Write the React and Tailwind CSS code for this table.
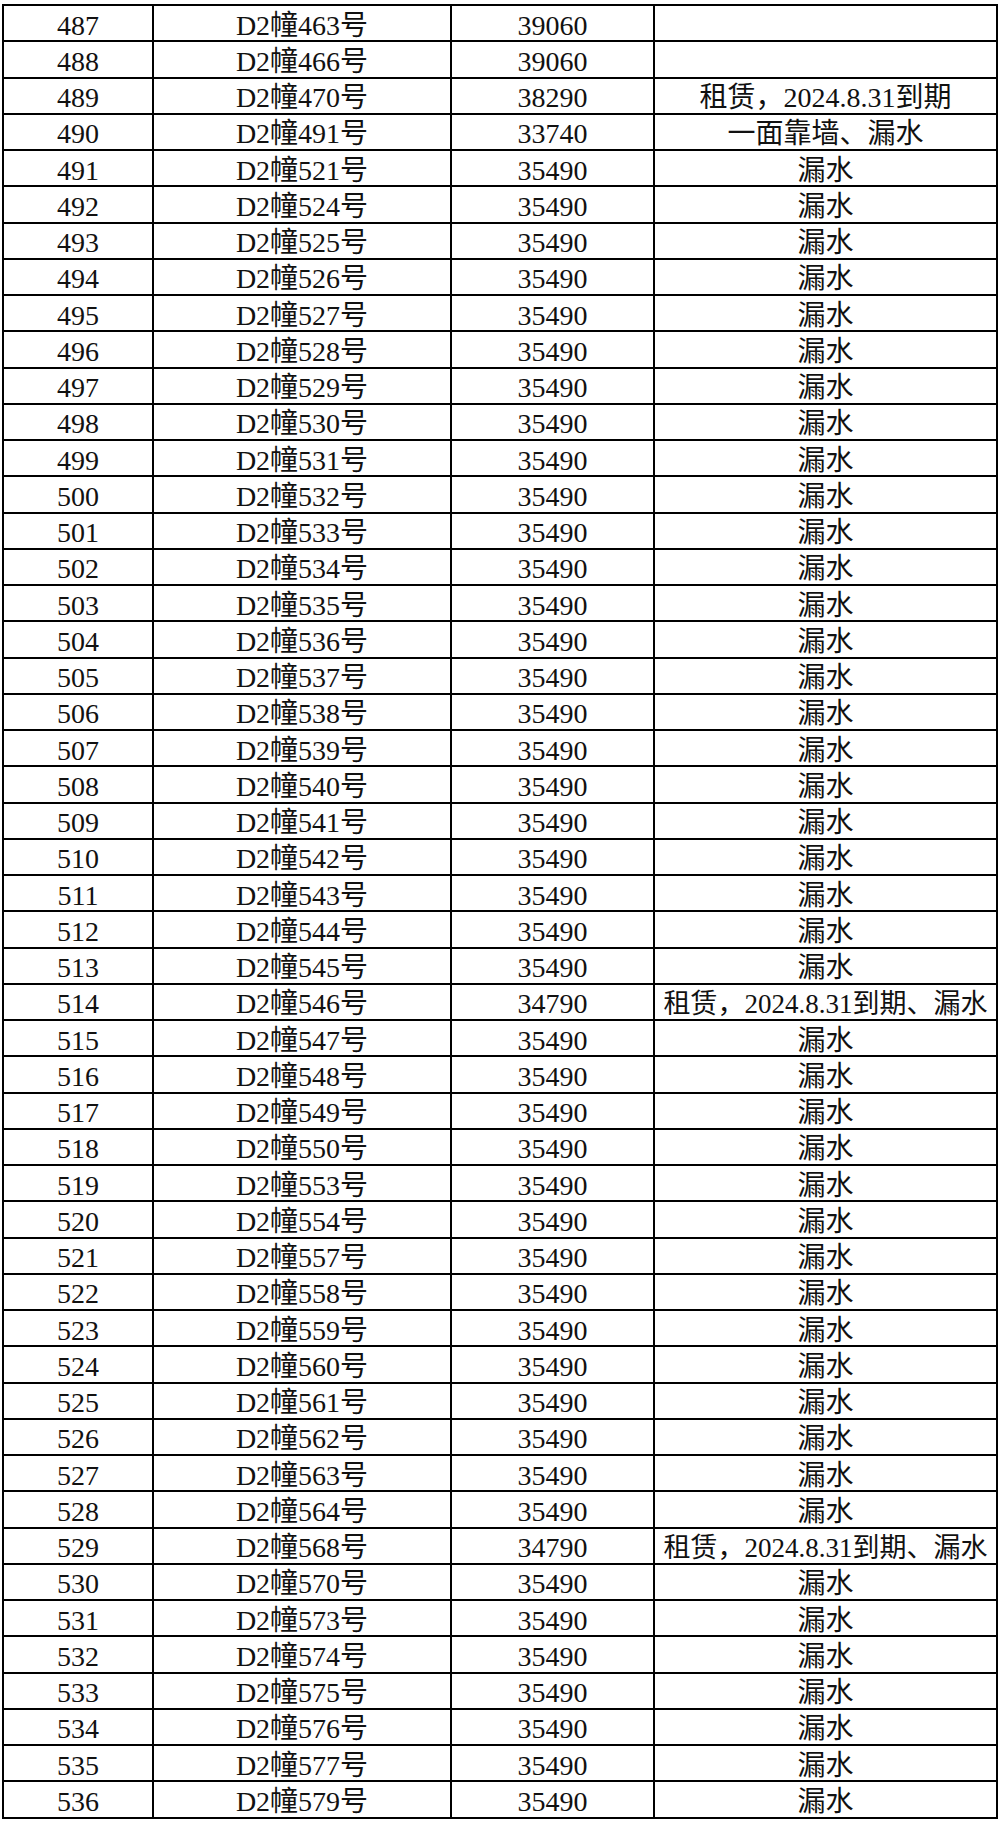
const LEAK = '漏水';
const LEASE = '租赁，2024.8.31到期、漏水';

const units = [
  ['463', '39060', ''],
  ['466', '39060', ''],
  ['470', '38290', '租赁，2024.8.31到期'],
  ['491', '33740', '一面靠墙、漏水'],
  ...['521', '524', '525', '526', '527', '528', '529', '530', '531', '532', '533', '534', '535', '536', '537', '538', '539', '540', '541', '542', '543', '544', '545'].map((n) => [n, '35490', LEAK]),
  ['546', '34790', LEASE],
  ...['547', '548', '549', '550', '553', '554', '557', '558', '559', '560', '561', '562', '563', '564'].map((n) => [n, '35490', LEAK]),
  ['568', '34790', LEASE],
  ...['570', '573', '574', '575', '576', '577', '579'].map((n) => [n, '35490', LEAK]),
];

const rows = units.map(([no, price, note], i) => ({
  id: 487 + i,
  name: `D2幢${no}号`,
  price,
  note,
}));

const App = () => {
  return (
    <div className="bg-white w-[1000px] h-[1828px] pt-[4px] pl-[2px]">
      <table
        className="table-fixed border-collapse text-[28px] text-[#111] leading-none"
        style={{ fontFamily: '"Liberation Serif", "Noto Sans CJK SC", serif' }}
      >
        <colgroup>
          <col className="w-[150px]" />
          <col className="w-[298px]" />
          <col className="w-[203px]" />
          <col className="w-[343px]" />
        </colgroup>
        <tbody>
          {rows.map((row) => (
            <tr key={row.id} className="h-[36.25px]">
              <td className="border-2 border-black text-center align-middle p-0 pt-[5px]">{row.id}</td>
              <td className="border-2 border-black text-center align-middle p-0 pt-[5px]">{row.name}</td>
              <td className="border-2 border-black text-center align-middle p-0 pt-[5px]">{row.price}</td>
              <td
                className={
                  row.note === LEASE
                    ? 'border-2 border-black text-center align-middle p-0 pt-[5px] whitespace-nowrap text-[27px]'
                    : 'border-2 border-black text-center align-middle p-0 pt-[5px] whitespace-nowrap'
                }
              >
                {row.note}
              </td>
            </tr>
          ))}
        </tbody>
      </table>
    </div>
  );
};

export default App;
